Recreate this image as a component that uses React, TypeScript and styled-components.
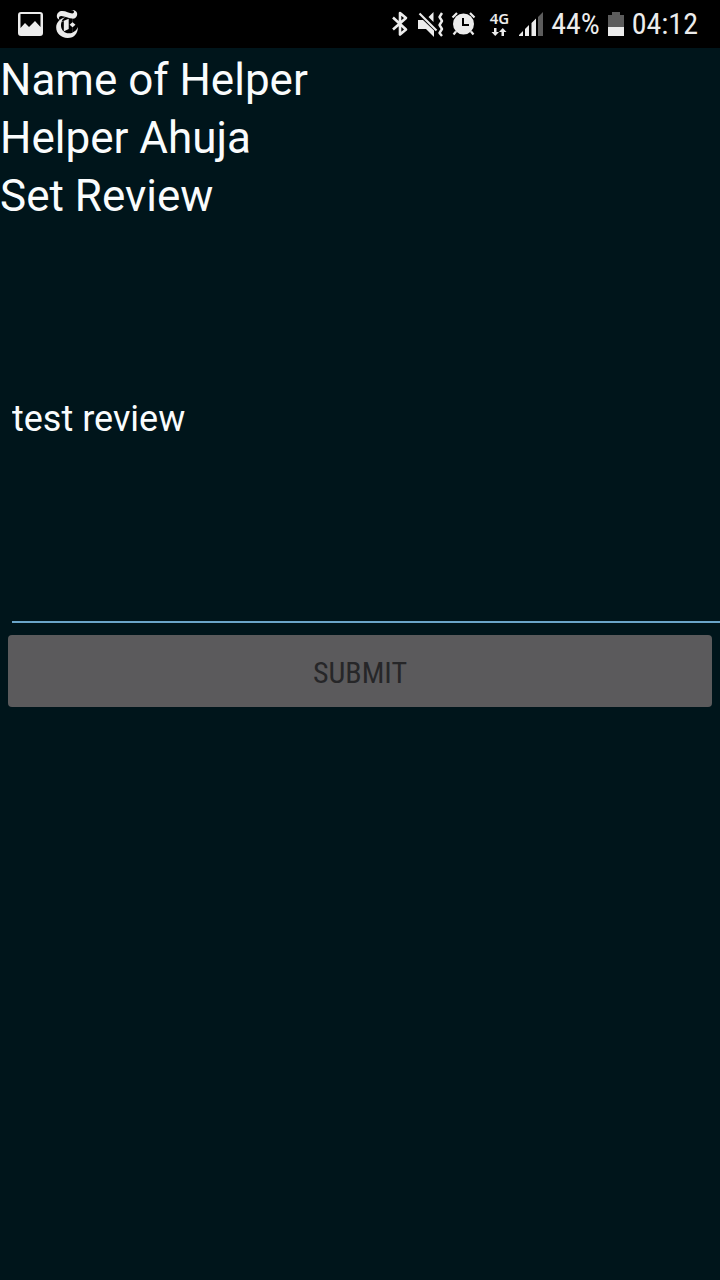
import React, { useState } from "react";
import styled, { createGlobalStyle } from "styled-components";
import { SiNewyorktimes } from "react-icons/si";

const GlobalStyle = createGlobalStyle`
  *, *::before, *::after { box-sizing: border-box; }
  html, body { margin: 0; background: #00151b; }
  body { font-family: Roboto, "Noto Sans", sans-serif; color: #fafcfd; }
`;

const Screen = styled.div`
  min-height: 100vh;
  display: flex;
  flex-direction: column;
  overflow-x: hidden;
`;

const StatusBar = styled.header`
  height: 48px;
  padding: 0 22px 0 18px;
  display: flex;
  align-items: center;
  justify-content: space-between;
  background: #000;
  color: #ececec;
`;

const StatusGroup = styled.div<{ $gap: number }>`
  display: flex;
  align-items: center;
  gap: ${({ $gap }) => $gap}px;
`;

const Icon = styled.svg`
  display: block;
  flex: none;
  overflow: visible;
`;

const StatusText = styled.span`
  font-family: "Roboto Condensed", Roboto, sans-serif;
  font-size: 30px;
  line-height: 48px;
  white-space: nowrap;
`;

const Network = styled.div`
  display: flex;
  flex-direction: column;
  align-items: center;
  gap: 2px;
  margin: 0 2px 0 6px;
  padding-bottom: 2px;
`;

const NetworkLabel = styled.span`
  font: 600 15px/16px "Noto Sans", sans-serif;
`;

const Details = styled.section`
  padding-top: 3px;
`;

const Line = styled.p`
  margin: 0;
  font-size: 44px;
  line-height: 58px;
`;

const Form = styled.form`
  display: flex;
  flex-direction: column;
`;

const ReviewBox = styled.textarea`
  height: 398px;
  margin: 0 0 12px 12px;
  padding: 170px 0 0;
  border: 0;
  border-bottom: 2px solid #6aa5c9;
  border-radius: 0;
  outline: 0;
  resize: none;
  background: transparent;
  color: inherit;
  font-family: inherit;
  font-size: 36px;
  line-height: 48px;
`;

const SubmitButton = styled.button`
  height: 72px;
  margin: 0 8px;
  padding: 4px 0 0;
  border: 0;
  border-radius: 4px;
  background: #5b5a5c;
  color: #262628;
  font-family: "Roboto Condensed", Roboto, sans-serif;
  font-size: 30px;
  line-height: 36px;
  text-transform: uppercase;
`;

const PictureIcon = () => (
  <Icon width="25" height="24" viewBox="0 0 25 24" aria-hidden="true">
    <path
      fill="#ececec"
      fillRule="evenodd"
      d="M3 0h19a3 3 0 0 1 3 3v18a3 3 0 0 1-3 3H3a3 3 0 0 1-3-3V3a3 3 0 0 1 3-3ZM2.500 2v14l4.500-5 4 4 6-6 5.500 6V2Z"
    />
  </Icon>
);

const BluetoothIcon = () => (
  <Icon width="18" height="26" viewBox="0 0 18 26" aria-hidden="true">
    <path
      d="M1 6.500 14 18.500 8 23.500V2l6 5L1 18.500"
      fill="none"
      stroke="#ececec"
      strokeWidth="2.6"
      strokeLinejoin="round"
    />
  </Icon>
);

const MutedIcon = () => (
  <Icon width="26" height="25" viewBox="0 0 26 25" aria-hidden="true">
    <path d="M0 8h5l11 10.500V25l-8-8H0ZM15.500 0v10l-5-5Z" fill="#ececec" />
    <path d="m1.500 1.500 17 17" stroke="#ececec" strokeWidth="2.2" />
    <path
      d="m24 1-2.500 4L24 9l-2.500 4 2.500 4-2.500 4 2.500 3"
      fill="none"
      stroke="#ececec"
      strokeWidth="2.4"
      strokeLinejoin="round"
    />
  </Icon>
);

const AlarmIcon = () => (
  <Icon width="24" height="24" viewBox="0 0 24 24" aria-hidden="true">
    <circle cx="11.500" cy="12" r="10.500" fill="#ececec" />
    <path d="M.5 5.500 5 1M18 1l4.500 4.500M4 19.500l-2.500 3M19 19.500l2.500 3" stroke="#ececec" strokeWidth="2.2" />
    <path d="M11 6v7h6" fill="none" stroke="#000" strokeWidth="2" />
  </Icon>
);

const TransferIcon = () => (
  <Icon width="14" height="8" viewBox="0 0 14 8" aria-hidden="true">
    <path d="M2 0h2.500v4H7L3.250 8-.5 4H2ZM10.750 0l3.750 4H12v4H9.500V4H7Z" fill="#ececec" />
  </Icon>
);

const SignalIcon = () => (
  <Icon width="24" height="24" viewBox="0 0 24 24" aria-hidden="true">
    <path d="M0 24v-1l4-4v5ZM6 24v-7l4-4v11ZM12.500 24V11l4.500-4.500V24Z" fill="#ececec" />
    <path d="M19 24V5l5-5v24Z" fill="#5c5c5c" />
  </Icon>
);

const BatteryIcon = () => (
  <Icon width="16" height="24" viewBox="0 0 16 24" aria-hidden="true">
    <path d="M0 3h4V0h8v3h4v12H0Z" fill="#5c5c5c" />
    <path d="M0 15h16v9H0Z" fill="#ececec" />
  </Icon>
);

export default function App() {
  const [review, setReview] = useState("test review");

  return (
    <>
      <GlobalStyle />
      <Screen>
        <StatusBar>
          <StatusGroup $gap={10}>
            <PictureIcon />
            <SiNewyorktimes size={28} color="#ececec" aria-hidden="true" />
          </StatusGroup>
          <StatusGroup $gap={8}>
            <BluetoothIcon />
            <MutedIcon />
            <AlarmIcon />
            <Network>
              <NetworkLabel>4G</NetworkLabel>
              <TransferIcon />
            </Network>
            <SignalIcon />
            <StatusText>44%</StatusText>
            <BatteryIcon />
            <StatusText>04:12</StatusText>
          </StatusGroup>
        </StatusBar>
        <main>
          <Details>
            <Line>Name of Helper</Line>
            <Line>Helper Ahuja</Line>
            <Line as="label" htmlFor="review">Set Review</Line>
          </Details>
          <Form onSubmit={(event) => event.preventDefault()}>
            <ReviewBox
              id="review"
              spellCheck={false}
              value={review}
              onChange={(event) => setReview(event.target.value)}
            />
            <SubmitButton type="submit">Submit</SubmitButton>
          </Form>
        </main>
      </Screen>
    </>
  );
}
